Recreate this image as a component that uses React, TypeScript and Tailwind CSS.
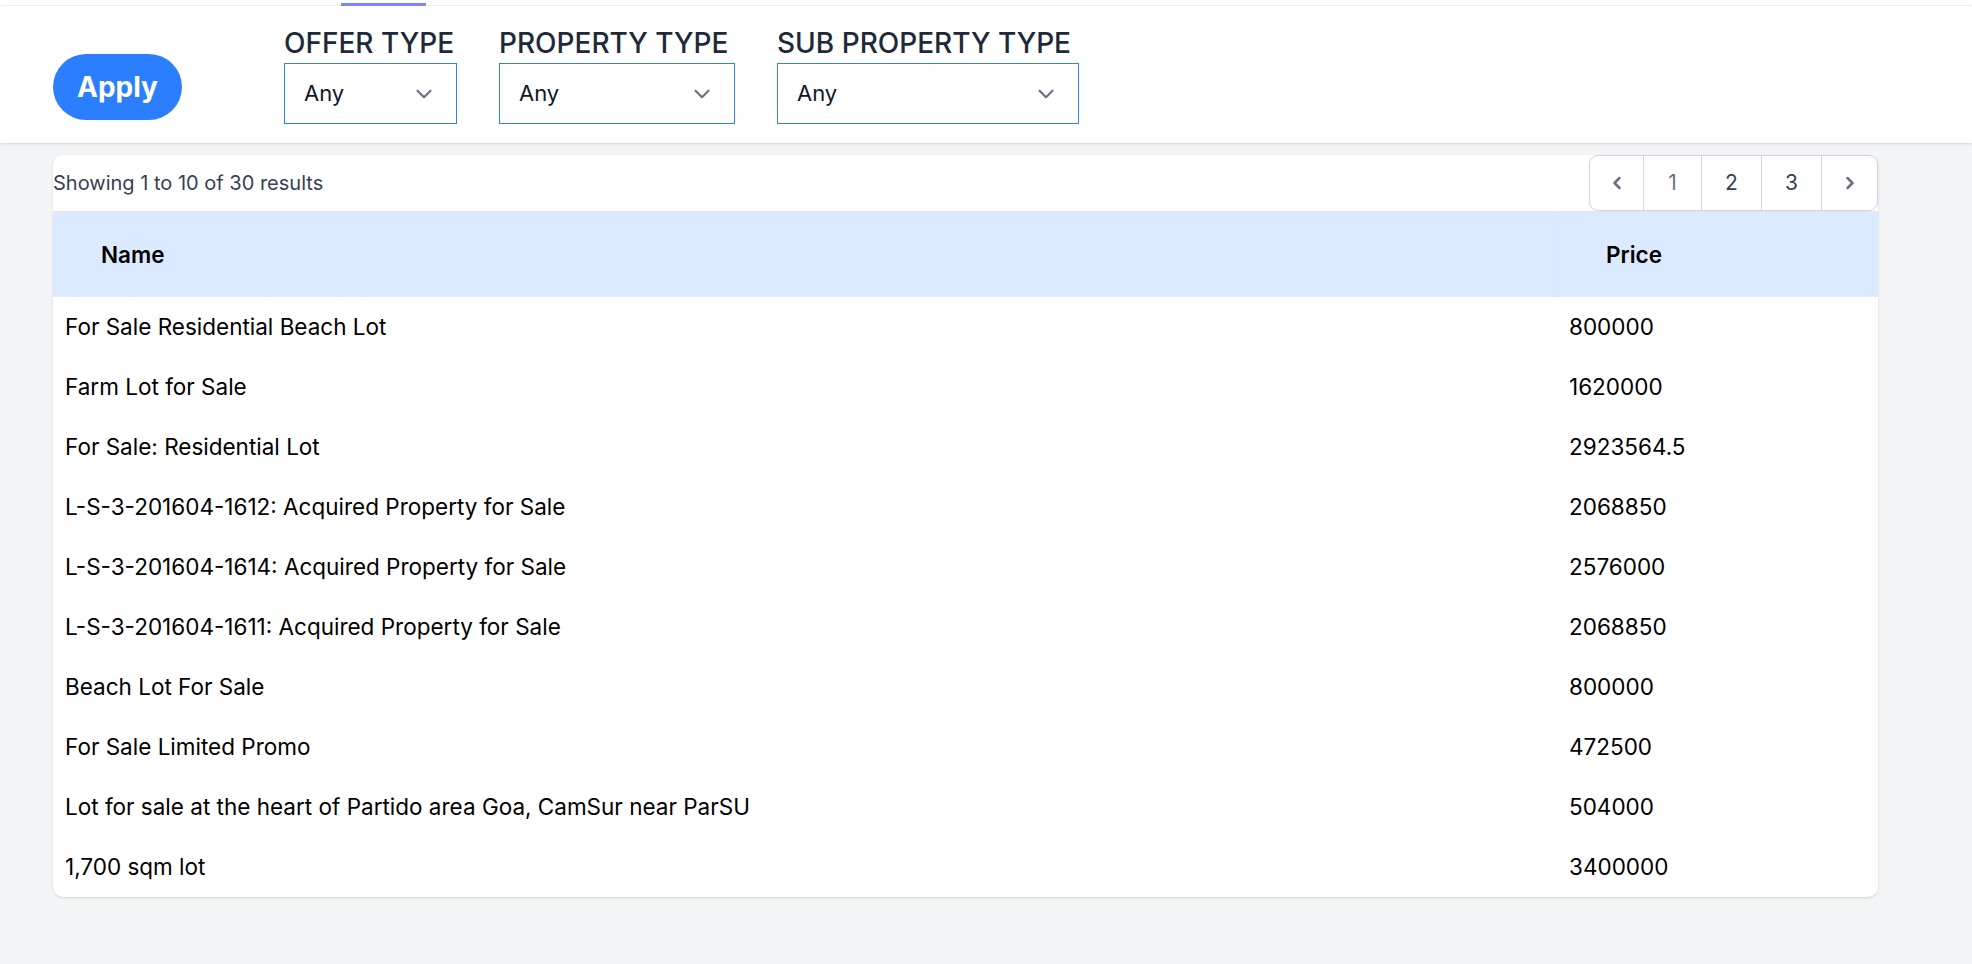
import { ChevronDown, ChevronLeft, ChevronRight } from 'lucide-react'

const listings = [
  { name: 'For Sale Residential Beach Lot', price: '800000' },
  { name: 'Farm Lot for Sale', price: '1620000' },
  { name: 'For Sale: Residential Lot', price: '2923564.5' },
  { name: 'L-S-3-201604-1612: Acquired Property for Sale', price: '2068850' },
  { name: 'L-S-3-201604-1614: Acquired Property for Sale', price: '2576000' },
  { name: 'L-S-3-201604-1611: Acquired Property for Sale', price: '2068850' },
  { name: 'Beach Lot For Sale', price: '800000' },
  { name: 'For Sale Limited Promo', price: '472500' },
  { name: 'Lot for sale at the heart of Partido area Goa, CamSur near ParSU', price: '504000' },
  { name: '1,700 sqm lot', price: '3400000' },
]

function FilterSelect({ label, width }: { label: string; width: string }) {
  return (
    <div className="flex flex-col">
      <span className="text-[28px] leading-[32px] font-medium text-gray-800 whitespace-nowrap">{label}</span>
      <div
        className={`${width} mt-[4px] h-[61px] border border-blue-500 bg-white flex items-center justify-between pl-[19px] pr-[19px]`}
      >
        <span className="text-[22px] text-gray-900">Any</span>
        <ChevronDown size={26} strokeWidth={2} className="text-gray-500" />
      </div>
    </div>
  )
}

export default function App() {
  return (
    <div className="min-h-screen bg-[#f3f4f6] font-['Inter',sans-serif]">
      {/* Nav remnant */}
      <div className="h-[6px] bg-white border-b border-gray-100 pl-[341px] flex items-end">
        <div className="h-[3px] w-[85px] bg-indigo-400 -mb-px" />
      </div>

      {/* Filters */}
      <div className="h-[137px] bg-white shadow flex items-start pl-[53px]">
        <button className="mt-[48px] h-[66px] w-[129px] rounded-full bg-blue-500 text-white text-[28px] font-bold">
          Apply
        </button>
        <div className="ml-[102px] mt-[21px] flex gap-[42px]">
          <FilterSelect label="OFFER TYPE" width="w-[173px]" />
          <FilterSelect label="PROPERTY TYPE" width="w-[236px]" />
          <FilterSelect label="SUB PROPERTY TYPE" width="w-[302px]" />
        </div>
      </div>

      {/* Results card */}
      <div className="ml-[53px] mt-[12px] w-[1825px] bg-white rounded-[10px] shadow-sm">
        <div className="h-[56px] flex items-center justify-between">
          <span className="text-[20px] text-gray-700">Showing 1 to 10 of 30 results</span>
          <div className="h-[56px] flex border border-gray-300 rounded-[9px] bg-white">
            <div className="w-[53px] flex items-center justify-center text-gray-500">
              <ChevronLeft size={20} strokeWidth={3} />
            </div>
            <div className="w-[58px] border-l border-gray-300 flex items-center justify-center text-[21px] text-gray-500">
              1
            </div>
            <div className="w-[60px] border-l border-gray-300 flex items-center justify-center text-[21px] text-gray-700">
              2
            </div>
            <div className="w-[60px] border-l border-gray-300 flex items-center justify-center text-[21px] text-gray-700">
              3
            </div>
            <div className="w-[56px] border-l border-gray-300 flex items-center justify-center text-gray-500">
              <ChevronRight size={20} strokeWidth={3} />
            </div>
          </div>
        </div>

        <div className="grid grid-cols-[1504px_1fr] h-[86px] bg-blue-100 border-t border-gray-200">
          <div className="flex items-center pl-[48px] text-[22.5px] font-semibold text-black">Name</div>
          <div className="flex items-center pl-[48px] border-l border-[#d6e4f9] text-[22.5px] font-semibold text-black">
            Price
          </div>
        </div>

        {listings.map((row, i) => (
          <div key={i} className="grid grid-cols-[1504px_1fr] h-[60px] text-[22.5px] text-black">
            <div className="flex items-center px-[12px]">{row.name}</div>
            <div className="flex items-center px-[12px]">{row.price}</div>
          </div>
        ))}
      </div>
    </div>
  )
}
